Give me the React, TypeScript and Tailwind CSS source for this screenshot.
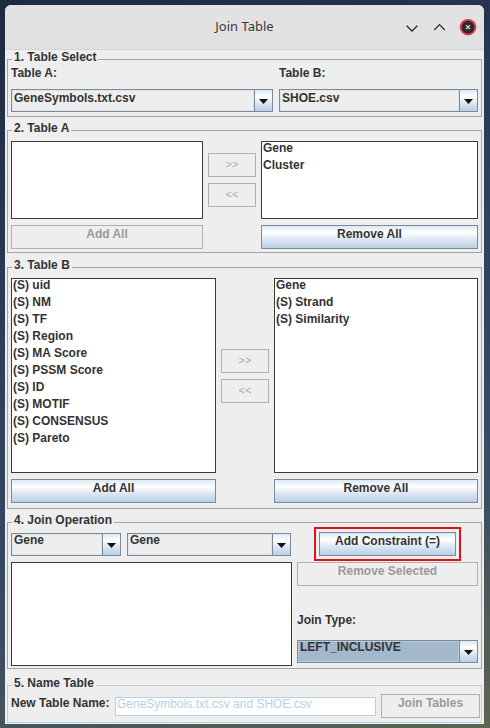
import React from "react";

const GRAD =
  "bg-[linear-gradient(180deg,#dde8f3_0%,#ffffff_30%,#dde8f3_60%,#b8cfe5_100%)]";

function Arrow() {
  return (
    <svg width="9" height="5" viewBox="0 0 9 5" className="mt-[2px]">
      <path d="M0 0H9L4.5 5Z" fill="#111111" />
    </svg>
  );
}

function Combo({
  text,
  pt,
  sel,
  className,
}: {
  text: string;
  pt: string;
  sel?: boolean;
  className?: string;
}) {
  return (
    <div className={`flex h-[23px] border border-[#7a8a99] ${className ?? ""}`}>
      <div
        className={`flex-1 min-w-0 pl-[2px] leading-[13px] whitespace-nowrap overflow-hidden font-bold ${pt} ${
          sel
            ? "bg-[#a3b8cc] shadow-[inset_0_0_0_1px_#b8cbe0]"
            : "bg-[#eeeeee] shadow-[inset_0_0_0_1px_#dbe5ef]"
        }`}
      >
        {text}
      </div>
      <div
        className={`w-[18px] border-l border-[#7a8a99] flex items-center justify-center ${GRAD}`}
      >
        <Arrow />
      </div>
    </div>
  );
}

function Btn({
  children,
  disabled,
  className,
}: {
  children: React.ReactNode;
  disabled?: boolean;
  className?: string;
}) {
  return (
    <div
      className={`h-[24px] border text-center leading-[13px] pt-[2px] font-bold whitespace-nowrap ${
        disabled
          ? "border-[#b0b0b0] bg-[#eeeeee] text-[#9a9a9a]"
          : `border-[#7a8a99] ${GRAD} text-[#333333]`
      } ${className ?? ""}`}
    >
      {children}
    </div>
  );
}

function MoveBtn({ children }: { children: React.ReactNode }) {
  return (
    <div className="h-[24px] border border-[#b0b0b0] bg-[#eeeeee] text-center text-[11px] leading-[13px] pt-[4px] text-[#ababab]">
      {children}
    </div>
  );
}

function List({ items, className }: { items: string[]; className?: string }) {
  return (
    <div className={`bg-white border border-[#3a3a3a] pl-[1px] overflow-hidden ${className ?? ""}`}>
      {items.map((i) => (
        <div key={i} className="h-[17px] leading-[13px] whitespace-nowrap font-bold">
          {i}
        </div>
      ))}
    </div>
  );
}

function Section({
  title,
  blue,
  className,
  bodyClass,
  children,
}: {
  title: string;
  blue?: boolean;
  className?: string;
  bodyClass?: string;
  children: React.ReactNode;
}) {
  const bc = blue ? "border-[#b8cfe5]" : "border-[#a5a5a5]";
  return (
    <div className={`mx-[2px] ${className ?? ""}`}>
      <div className="flex h-[14px]">
        <div className={`w-[5px] h-[7px] self-end border-t border-l ${bc}`} />
        <div className="px-[2px] leading-[10px] font-bold whitespace-nowrap">{title}</div>
        <div className={`flex-1 h-[7px] self-end border-t border-r ${bc}`} />
      </div>
      <div className={`border-l border-r border-b ${bc} ${bodyClass ?? ""}`}>{children}</div>
    </div>
  );
}

export default function App() {
  const tableB = [
    "(S) uid",
    "(S) NM",
    "(S) TF",
    "(S) Region",
    "(S) MA Score",
    "(S) PSSM Score",
    "(S) ID",
    "(S) MOTIF",
    "(S) CONSENSUS",
    "(S) Pareto",
  ];
  return (
    <div className="w-[490px] h-[728px] overflow-hidden pt-[5px] pl-[5px] bg-[linear-gradient(160deg,#1c2a40_0%,#2d3f5a_40%,#3a4b63_70%,#5b6650_100%)]">
      <div className="w-[479px] bg-[#eeeeee] rounded-t-[6px] overflow-hidden text-[12px] text-[#333333] font-['Liberation_Sans',Arial,sans-serif] pb-[1px]">
        {/* Title bar */}
        <div className="h-[45px] bg-[#e2e2e2] border-b border-[#d2d2d2] grid grid-cols-[1fr_auto_1fr] items-center">
          <div />
          <div className="font-['Noto_Sans',sans-serif] text-[13px] text-[#3a3a3a] pb-[1px]">
            Join Table
          </div>
          <div className="flex justify-end items-center gap-[8px] pr-[6px]">
            <div className="w-[20px] h-[20px] flex items-center justify-center">
              <svg width="20" height="20" viewBox="0 0 20 20">
                <path d="M4.7 8.7L10 14L15.3 8.7" fill="none" stroke="#2e2e2e" strokeWidth="1.3" />
              </svg>
            </div>
            <div className="w-[20px] h-[20px] flex items-center justify-center">
              <svg width="20" height="20" viewBox="0 0 20 20">
                <path d="M4.2 13L9.5 7.6L14.8 13" fill="none" stroke="#2e2e2e" strokeWidth="1.3" />
              </svg>
            </div>
            <div className="w-[20px] h-[20px] flex items-center justify-center">
              <svg width="20" height="20" viewBox="0 0 20 20">
                <circle cx="10" cy="10.2" r="8.3" fill="#e23a55" />
                <circle cx="10" cy="10.2" r="6.4" fill="#2b2b2b" />
                <path d="M8 8.2L12 12.2M12 8.2L8 12.2" stroke="#f3d6db" strokeWidth="1.2" />
              </svg>
            </div>
          </div>
        </div>

        {/* 1. Table Select */}
        <Section title="1. Table Select" className="mt-[2px]" bodyClass="px-[3px] pb-[4px]">
          <div className="grid grid-cols-[262px_199px] gap-x-[6px] gap-y-[9px] pt-[1px]">
            <div className="font-bold leading-[13px]">Table A:</div>
            <div className="font-bold leading-[13px]">Table B:</div>
            <Combo text="GeneSymbols.txt.csv" pt="pt-[2px]" />
            <Combo text="SHOE.csv" pt="pt-[2px]" />
          </div>
        </Section>

        {/* 2. Table A */}
        <Section title="2. Table A" className="mt-[6px]" bodyClass="px-[3px] pt-[4px] pb-[3px]">
          <div className="grid grid-cols-[192px_48px_217px] grid-rows-[78px_24px] gap-x-[5px] gap-y-[6px]">
            <List items={[]} />
            <div className="flex flex-col justify-center gap-[6px]">
              <MoveBtn>&gt;&gt;</MoveBtn>
              <MoveBtn>&lt;&lt;</MoveBtn>
            </div>
            <List items={["Gene", "Cluster"]} />
            <Btn disabled>Add All</Btn>
            <div />
            <Btn>Remove All</Btn>
          </div>
        </Section>

        {/* 3. Table B */}
        <Section title="3. Table B" className="mt-[7px]" bodyClass="px-[3px] pt-[4px] pb-[5px]">
          <div className="grid grid-cols-[205px_48px_204px] grid-rows-[195px_24px] gap-x-[5px] gap-y-[6px]">
            <List items={tableB} />
            <div className="flex flex-col justify-center gap-[6px]">
              <MoveBtn>&gt;&gt;</MoveBtn>
              <MoveBtn>&lt;&lt;</MoveBtn>
            </div>
            <List items={["Gene", "(S) Strand", "(S) Similarity"]} />
            <Btn>Add All</Btn>
            <div />
            <Btn>Remove All</Btn>
          </div>
        </Section>

        {/* 4. Join Operation */}
        <Section title="4. Join Operation" className="mt-[6px]" bodyClass="px-[3px] pb-[2px]">
          <div className="grid grid-cols-[281px_181px] gap-x-[5px] items-center h-[34px] -mt-[2px]">
            <div className="flex gap-[6px]">
              <Combo text="Gene" pt="pt-[0px]" className="w-[110px]" />
              <Combo text="Gene" pt="pt-[0px]" className="w-[164px]" />
            </div>
            <div className="justify-self-center border-2 border-[#e3101c] p-[3px]">
              <Btn className="w-[137px]">Add Constraint (=)</Btn>
            </div>
          </div>
          <div className="grid grid-cols-[281px_181px] gap-x-[5px] mt-[1px]">
            <div className="h-[104px] bg-white border border-[#3a3a3a]" />
            <div className="flex flex-col">
              <Btn disabled>Remove Selected</Btn>
              <div className="font-bold leading-[13px] mt-[28px]">Join Type:</div>
              <Combo text="LEFT_INCLUSIVE" pt="pt-[0px]" sel className="mt-[13px]" />
            </div>
          </div>
        </Section>

        {/* 5. Name Table */}
        <Section title="5. Name Table" blue className="mt-[9px]" bodyClass="pl-[3px] pr-[1px] pt-[2px] pb-[4px]">
          <div className="flex items-start">
            <div className="w-[104px] font-bold leading-[13px] mt-[3px] whitespace-nowrap">
              New Table Name:
            </div>
            <div className="w-[261px] h-[19px] mt-[3px] border border-[#b8cfe5] bg-white pl-[1px] leading-[13px] text-[#b8cfe5] whitespace-nowrap overflow-hidden">
              GeneSymbols.txt.csv and SHOE.csv
            </div>
            <Btn disabled className="w-[99px] ml-[5px]">
              Join Tables
            </Btn>
          </div>
        </Section>
      </div>
    </div>
  );
}
